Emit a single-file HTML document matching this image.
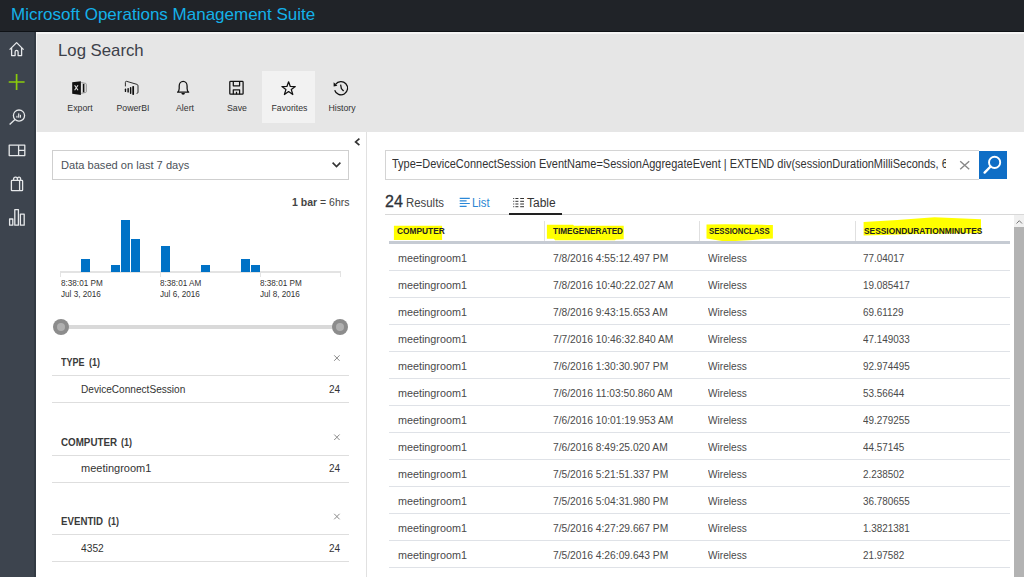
<!DOCTYPE html>
<html><head><meta charset="utf-8">
<style>
*{margin:0;padding:0;box-sizing:border-box}
html,body{width:1024px;height:577px;overflow:hidden;background:#fff;font-family:"Liberation Sans",sans-serif;position:relative}
.a{position:absolute;white-space:nowrap}
#top{left:0;top:0;width:1024px;height:32px;background:#202328}
#title{left:11px;top:5px;font-size:17px;color:#14b1e8}
#nav{left:0;top:32px;width:35px;height:545px;background:#3d444e}
#navline{left:34px;top:32px;width:2px;height:545px;background:#333a43}
#topline{left:0;top:31px;width:1024px;height:1px;background:#0f1216}
#hdr{left:36px;top:32px;width:988px;height:100px;background:#e6e6e6;border-top:2px solid #f5f5f5;border-left:1px solid #f5f5f5}
#ls{left:57.8px;top:40.5px;font-size:17px;color:#3c4049;transform:scaleX(0.985);transform-origin:0 0}
.tb{top:71px;width:52px;height:52px;text-align:center}
.tb .lbl{position:absolute;left:0.5px;width:100%;top:30.5px;font-size:9.5px;color:#333;transform:scaleX(0.92);transform-origin:50% 0}
#fav{background:#f2f2f2}
#vdiv{left:366px;top:132px;width:1px;height:445px;background:#e1e1e1}
/* left panel */
#dd{left:52px;top:150px;width:297px;height:30px;border:1px solid #cfcfcf}
#ddt{left:61px;top:158.7px;font-size:11.5px;color:#4b5159}
#bar1{left:292px;top:196px;font-size:10.5px;color:#444}
.hb{position:absolute;background:#0072c6;width:9px;bottom:305px}
#axis{left:60px;top:271px;width:281px;height:2px;background:#e3e3e3}
.tick{position:absolute;top:271px;width:1px;height:6px;background:#e3e3e3}
.axl{position:absolute;top:278px;font-size:9px;line-height:11px;color:#333}
#track{left:61px;top:325px;width:279px;height:4px;background:#d9d9d9}
.knob{position:absolute;top:319px;width:16px;height:16px;border-radius:50%;background:#8c8c8c}
.knob i{position:absolute;left:4px;top:4px;width:8px;height:8px;border-radius:50%;background:#b0b0b0}
.sh{position:absolute;left:61px;font-size:10px;font-weight:bold;color:#3a3a3a;transform-origin:0 0}
.sx{position:absolute;left:333px;font-size:11px;color:#888}
.sl{position:absolute;left:52px;width:297px;height:1px;background:#dedede}
.sv{position:absolute;left:81px;font-size:11px;color:#333}
.sc{position:absolute;left:328.6px;font-size:11px;color:#333;transform:scaleX(0.91);transform-origin:0 0}
/* right panel */
#sbox{left:385px;top:150px;width:594px;height:30px;border:1px solid #d4d4d4;border-right:none}

#sclip{left:392px;top:150px;width:554px;height:30px;overflow:hidden}
#stxt{position:absolute;left:0;top:7px;font-size:12px;color:#333;transform:scaleX(0.916);transform-origin:0 0;white-space:nowrap}
.th{transform:scaleX(0.89);transform-origin:0 0}
.td{transform-origin:0 0}
.c1{transform:scaleX(0.98)}.c2{transform:scaleX(0.933)}.c3{transform:scaleX(0.92)}.c4{transform:scaleX(0.9)}
.axl{transform:scaleX(0.906);transform-origin:0 0}
#resw,#list{transform:scaleX(0.95);transform-origin:0 0}
#ddt{transform:scaleX(0.965);transform-origin:0 0}
.sv{transform-origin:0 0}

#sx{left:958px;top:155px;font-size:16px;color:#888}
#sbtn{left:979px;top:151px;width:28px;height:28px;background:#0f6ec6}
#res24{left:385px;top:193px;font-size:16px;color:#2e3238;-webkit-text-stroke:0.3px #2e3238}
#resw{left:406px;top:196px;font-size:12px;color:#444}
#list{left:472px;top:196px;font-size:12px;color:#2a86d3}
#table{left:527px;top:196px;font-size:12px;color:#333}
#tline{left:385px;top:214px;width:640px;height:1px;background:#d8d8d8}
#tul{left:509px;top:213px;width:53px;height:2px;background:#222}
.yl{position:absolute;background:#fafa0a}
.th{position:absolute;top:225px;font-size:9.5px;font-weight:bold;color:#222}
.cd{position:absolute;top:221px;width:1px;height:20px;background:#e0e0e0}
#hline{left:389px;top:241px;width:621px;height:2.6px;background:#c6cbd3}
.rl{position:absolute;left:389px;width:621px;height:1px;background:#dfe2e7}
.td{position:absolute;font-size:11px;color:#4a4a4a}
#sbar{left:1014px;top:227px;width:10px;height:350px;background:#b3b3b3}
#sup{left:1014px;top:215px;width:10px;height:12px;background:#f0f0f0}
</style></head><body>
<div class="a" id="top"></div>
<div class="a" id="title">Microsoft Operations Management Suite</div>
<div class="a" id="nav"></div>
<div class="a" id="navline"></div>
<div class="a" id="topline"></div>
<div class="a" id="hdr"></div>
<div class="a" id="ls">Log Search</div>
<div class="a tb" style="left:53px"><div class="lbl">Export</div></div>
<div class="a tb" style="left:106px"><div class="lbl">PowerBI</div></div>
<div class="a tb" style="left:158px"><div class="lbl">Alert</div></div>
<div class="a tb" style="left:210px"><div class="lbl">Save</div></div>
<div class="a tb" id="fav" style="left:262px;width:53px"><div class="lbl">Favorites</div></div>
<div class="a tb" style="left:315px"><div class="lbl">History</div></div>
<div class="a" id="vdiv"></div>

<!-- LEFT PANEL -->
<div class="a" id="dd"></div>
<div class="a" id="ddt">Data based on last 7 days</div>
<div class="a" id="bar1"><b>1 bar</b> = 6hrs</div>
<div class="a" id="axis"></div>
<div class="hb" style="left:81px;top:258.5px"></div>
<div class="hb" style="left:111px;top:265px"></div>
<div class="hb" style="left:121px;top:219.5px"></div>
<div class="hb" style="left:131px;top:239px"></div>
<div class="hb" style="left:161px;top:245.5px"></div>
<div class="hb" style="left:201px;top:265px"></div>
<div class="hb" style="left:241px;top:258.5px"></div>
<div class="hb" style="left:251px;top:265px"></div>
<div class="tick" style="left:60px"></div>
<div class="tick" style="left:160px"></div>
<div class="tick" style="left:260px"></div>
<div class="tick" style="left:340px"></div>
<div class="axl" style="left:61px">8:38:01 PM<br>Jul 3, 2016</div>
<div class="axl" style="left:160px">8:38:01 AM<br>Jul 6, 2016</div>
<div class="axl" style="left:260px">8:38:01 PM<br>Jul 8, 2016</div>
<div class="a" id="track"></div>
<div class="knob" style="left:53px"><i></i></div>
<div class="knob" style="left:332px"><i></i></div>

<div class="sh" style="top:357px;transform:scaleX(0.9)">TYPE</div><div class="sh" style="top:357px;left:89.4px;transform:scaleX(0.9)">(1)</div>
<div class="sl" style="top:375px"></div>
<div class="sv" style="top:383px;transform:scaleX(0.917)">DeviceConnectSession</div>
<div class="sc" style="top:383px">24</div>
<div class="sl" style="top:402px"></div>

<div class="sh" style="top:436.5px;transform:scaleX(0.98)">COMPUTER</div><div class="sh" style="top:436.5px;left:121.2px;transform:scaleX(0.9)">(1)</div>
<div class="sl" style="top:455px"></div>
<div class="sv" style="top:462px">meetingroom1</div>
<div class="sc" style="top:462px">24</div>
<div class="sl" style="top:482px"></div>

<div class="sh" style="top:516px;transform:scaleX(0.97)">EVENTID</div><div class="sh" style="top:516px;left:108px;transform:scaleX(0.9)">(1)</div>
<div class="sl" style="top:534px"></div>
<div class="sv" style="top:542px;transform:scaleX(0.93)">4352</div>
<div class="sc" style="top:542px">24</div>
<div class="sl" style="top:561px"></div>

<!-- RIGHT PANEL -->
<div class="a" id="sbox"></div>
<div class="a" id="sclip"><div id="stxt">Type=DeviceConnectSession EventName=SessionAggregateEvent | EXTEND div(sessionDurationMilliSeconds, 6</div></div>
<div class="a" id="sbtn"></div>
<div class="a" id="res24">24</div>
<div class="a" id="resw">Results</div>
<div class="a" id="list">List</div>
<div class="a" id="table">Table</div>
<div class="a" id="tline"></div>
<div class="a" id="tul"></div>

<svg class="a" style="left:0;top:0" width="1024" height="577" viewBox="0 0 1024 577">
<g fill="#ffff00">
<path d="M393.9 225.8 H442.1 V239.9 H393.9 Z"/>
<path d="M546.9 224.8 L573 224.8 L574 225.8 L623.7 225.8 L623.7 239.3 L616 239.4 L615 240.2 L555 240.2 L554 238.7 L546.9 238.7 Z"/>
<path d="M706.5 224.4 Q740 224 772.9 225 L772.9 238.6 L762 239 Q740 241.4 722 241 L706.5 238.6 Z"/>
<path d="M863.6 222 Q900 220 934.5 217.2 L981 219.2 L981 233 Q930 233.5 900 234.5 L863.6 235.5 Z"/>
</g></svg>
<div class="th" style="left:396.8px;transform:scaleX(0.88)">COMPUTER</div>
<div class="th" style="left:553px;transform:scaleX(0.857)">TIMEGENERATED</div>
<div class="th" style="left:708.5px;transform:scaleX(0.815)">SESSIONCLASS</div>
<div class="th" style="left:863.5px;transform:scaleX(0.88)">SESSIONDURATIONMINUTES</div>
<div class="cd" style="left:544px"></div>
<div class="cd" style="left:699px"></div>
<div class="cd" style="left:855px"></div>
<div class="a" id="hline"></div>
<div id="rows">
<div class="td c1" style="left:397.7px;top:252px">meetingroom1</div><div class="td c2" style="left:553px;top:252px">7/8/2016 4:55:12.497 PM</div><div class="td c3" style="left:708px;top:252px">Wireless</div><div class="td c4" style="left:863px;top:252px">77.04017</div>
<div class="rl" style="top:270px"></div>
<div class="td c1" style="left:397.7px;top:279px">meetingroom1</div><div class="td c2" style="left:553px;top:279px">7/8/2016 10:40:22.027 AM</div><div class="td c3" style="left:708px;top:279px">Wireless</div><div class="td c4" style="left:863px;top:279px">19.085417</div>
<div class="rl" style="top:297px"></div>
<div class="td c1" style="left:397.7px;top:306px">meetingroom1</div><div class="td c2" style="left:553px;top:306px">7/8/2016 9:43:15.653 AM</div><div class="td c3" style="left:708px;top:306px">Wireless</div><div class="td c4" style="left:863px;top:306px">69.61129</div>
<div class="rl" style="top:324px"></div>
<div class="td c1" style="left:397.7px;top:333px">meetingroom1</div><div class="td c2" style="left:553px;top:333px">7/7/2016 10:46:32.840 AM</div><div class="td c3" style="left:708px;top:333px">Wireless</div><div class="td c4" style="left:863px;top:333px">47.149033</div>
<div class="rl" style="top:351px"></div>
<div class="td c1" style="left:397.7px;top:360px">meetingroom1</div><div class="td c2" style="left:553px;top:360px">7/6/2016 1:30:30.907 PM</div><div class="td c3" style="left:708px;top:360px">Wireless</div><div class="td c4" style="left:863px;top:360px">92.974495</div>
<div class="rl" style="top:378px"></div>
<div class="td c1" style="left:397.7px;top:387px">meetingroom1</div><div class="td c2" style="left:553px;top:387px">7/6/2016 11:03:50.860 AM</div><div class="td c3" style="left:708px;top:387px">Wireless</div><div class="td c4" style="left:863px;top:387px">53.56644</div>
<div class="rl" style="top:405px"></div>
<div class="td c1" style="left:397.7px;top:414px">meetingroom1</div><div class="td c2" style="left:553px;top:414px">7/6/2016 10:01:19.953 AM</div><div class="td c3" style="left:708px;top:414px">Wireless</div><div class="td c4" style="left:863px;top:414px">49.279255</div>
<div class="rl" style="top:432px"></div>
<div class="td c1" style="left:397.7px;top:441px">meetingroom1</div><div class="td c2" style="left:553px;top:441px">7/6/2016 8:49:25.020 AM</div><div class="td c3" style="left:708px;top:441px">Wireless</div><div class="td c4" style="left:863px;top:441px">44.57145</div>
<div class="rl" style="top:459px"></div>
<div class="td c1" style="left:397.7px;top:468px">meetingroom1</div><div class="td c2" style="left:553px;top:468px">7/5/2016 5:21:51.337 PM</div><div class="td c3" style="left:708px;top:468px">Wireless</div><div class="td c4" style="left:863px;top:468px">2.238502</div>
<div class="rl" style="top:486px"></div>
<div class="td c1" style="left:397.7px;top:495px">meetingroom1</div><div class="td c2" style="left:553px;top:495px">7/5/2016 5:04:31.980 PM</div><div class="td c3" style="left:708px;top:495px">Wireless</div><div class="td c4" style="left:863px;top:495px">36.780655</div>
<div class="rl" style="top:513px"></div>
<div class="td c1" style="left:397.7px;top:522px">meetingroom1</div><div class="td c2" style="left:553px;top:522px">7/5/2016 4:27:29.667 PM</div><div class="td c3" style="left:708px;top:522px">Wireless</div><div class="td c4" style="left:863px;top:522px">1.3821381</div>
<div class="rl" style="top:540px"></div>
<div class="td c1" style="left:397.7px;top:549px">meetingroom1</div><div class="td c2" style="left:553px;top:549px">7/5/2016 4:26:09.643 PM</div><div class="td c3" style="left:708px;top:549px">Wireless</div><div class="td c4" style="left:863px;top:549px">21.97582</div>
<div class="rl" style="top:567px"></div>
</div>

<div class="a" id="sup"></div>
<div class="a" id="sbar"></div>
<svg class="a" style="left:0;top:0" width="1024" height="577" viewBox="0 0 1024 577" fill="none">
<!-- nav icons -->
<g stroke="#e6e8ea" stroke-width="1.3" stroke-linejoin="round">
<path d="M9.6 49.6 L16.6 42.6 L23.6 49.6 M11.6 47.6 V55.6 H15.1 V52 Q15.1 50.3 16.6 50.3 Q18.1 50.3 18.1 52 V55.6 H21.6 V47.6"/>
<circle cx="19" cy="115.6" r="5.6"/>
<path d="M9.6 124.6 L15 119.6"/>
<rect x="9.2" y="145.2" width="15.6" height="10.4"/>
<path d="M18.6 145.2 V155.6 M18.6 150.3 H24.8"/>
<rect x="11.4" y="180.4" width="11.2" height="10.2" rx="0.6"/>
<path d="M19.6 180.4 V190.6 M13.6 180.4 V179.2 Q13.6 177.1 15.6 177.1 Q17.4 177.1 17.4 179.2 V180.4 M17.4 179.2 Q17.4 177.1 19 177.1 Q20.6 177.1 20.6 179.2 V180.4"/>
<rect x="9.6" y="219" width="3.2" height="6.2"/>
<rect x="14.8" y="209.6" width="3.6" height="15.6"/>
<rect x="20.4" y="214.2" width="3.8" height="11"/>
</g>
<g fill="#e6e8ea"><rect x="16.4" y="115.8" width="1.1" height="1.9"/><rect x="18.1" y="113.4" width="1.2" height="4.3"/><rect x="19.9" y="114.8" width="1.1" height="2.9"/></g>
<path d="M8.7 82 H24.6 M16.6 74 V90" stroke="#8bcb0c" stroke-width="1.7"/>
<!-- toolbar icons -->
<path d="M72.2 82.3 L80.9 81.2 V94.9 L72.2 93.8 Z" fill="#111"/>
<path d="M81.2 82.6 L85.6 83.4 Q86.3 83.6 86.3 84.3 V91.6 Q86.3 92.3 85.6 92.5 L81.2 93.3" stroke="#8a8a8a" stroke-width="0.9"/>
<rect x="82.8" y="83.9" width="1.6" height="8.4" fill="#111"/>
<path d="M74.6 85.3 L78 90.3 M78 85.3 L74.6 90.3" stroke="#ddd" stroke-width="1.15"/>
<path d="M125.4 86.4 V82.4 Q125.4 81.2 126.6 81.3 L137 84.4 Q138 84.8 138 85.8 V92.2 Q138 93.4 136.6 93.4" stroke="#222" stroke-width="0.95" stroke-linejoin="round"/>
<g fill="#111">
<rect x="124.8" y="88.6" width="1.35" height="3.4" rx="0.6"/>
<rect x="127.4" y="88.1" width="1.45" height="4.5" rx="0.6"/>
<rect x="129.9" y="87.1" width="1.45" height="6.8" rx="0.6"/>
<rect x="132.3" y="86" width="1.75" height="8.9" rx="0.7"/>
</g>
<g stroke="#111" stroke-width="1.25" stroke-linejoin="round">
<path d="M177.6 92.2 Q179.2 91 179.2 88.5 V86 A3.95 4.6 0 0 1 187.1 86 V88.5 Q187.1 91 188.7 92.2 Z"/>
<rect x="229.8" y="81.4" width="13.3" height="12.8" rx="0.8"/>
<path d="M233.3 81.4 V85.8 H239.6 V81.4 M233.3 94.2 V89.8 H239.6 V94.2 M236.5 91.8 V94.2"/>
<path d="M288.6 81.8 L290.3 86.5 L295.3 86.6 L291.3 89.6 L292.8 94.5 L288.6 91.6 L284.4 94.5 L285.9 89.6 L281.9 86.6 L286.9 86.5 Z"/>
<path d="M335.6 84.4 A6.6 6.6 0 1 1 334.7 90.2"/>
<path d="M340.6 84.6 L341.4 88.6 L343.6 91"/>
</g>
<path d="M183.15 93 m-1.8 0 a1.8 1.8 0 0 0 3.6 0 Z" fill="#111"/>
<path d="M333.6 82.2 L337.4 85.8 L333.6 86.6 Z" fill="#111"/>
<path d="M334.2 355.3 L339.6 360.8 M339.6 355.3 L334.2 360.8 M334.2 434.5 L339.6 440 M339.6 434.5 L334.2 440 M334.2 513.8 L339.6 519.3 M339.6 513.8 L334.2 519.3" stroke="#8a8a8a" stroke-width="1"/>
<!-- arrows -->
<path d="M359.4 138.6 L355.6 141.9 L359.4 145.2" stroke="#333" stroke-width="1.7"/>
<path d="M332.6 162.6 L336.5 166.5 L340.4 162.6" stroke="#333" stroke-width="1.6"/>
<!-- search -->
<path d="M960.2 161.2 L969.2 169.2 M969.2 161.2 L960.2 169.2" stroke="#888" stroke-width="1.4"/>
<circle cx="994.6" cy="162.4" r="5.6" stroke="#fff" stroke-width="1.9"/>
<path d="M984.6 172.6 L990.6 166.5" stroke="#fff" stroke-width="2.4" stroke-linecap="round"/>
<!-- list / table icons -->
<path d="M459.7 198.3 H469.8 M459.7 200.8 H466.6 M459.7 203.5 H469.8 M459.7 206.3 H466.6" stroke="#2b88d8" stroke-width="1.2"/>
<g fill="#333">
<rect x="513.2" y="198" width="1" height="1"/><rect x="515.4" y="198" width="3" height="1"/><rect x="520.2" y="198" width="3.8" height="1"/>
<rect x="513.2" y="200.8" width="1" height="1"/><rect x="515.4" y="200.8" width="3" height="1"/><rect x="520.2" y="200.8" width="3.8" height="1"/>
<rect x="513.2" y="203.5" width="1" height="1"/><rect x="515.4" y="203.5" width="3" height="1"/><rect x="520.2" y="203.5" width="3.8" height="1"/>
<rect x="513.2" y="206.2" width="1" height="1"/><rect x="515.4" y="206.2" width="3" height="1"/><rect x="520.2" y="206.2" width="3.8" height="1"/>
</g>
<!-- scrollbar up -->
<path d="M1016.5 223.5 L1019.3 220.7 L1022 223.5" stroke="#777" stroke-width="1"/>
</svg>
</body></html>
